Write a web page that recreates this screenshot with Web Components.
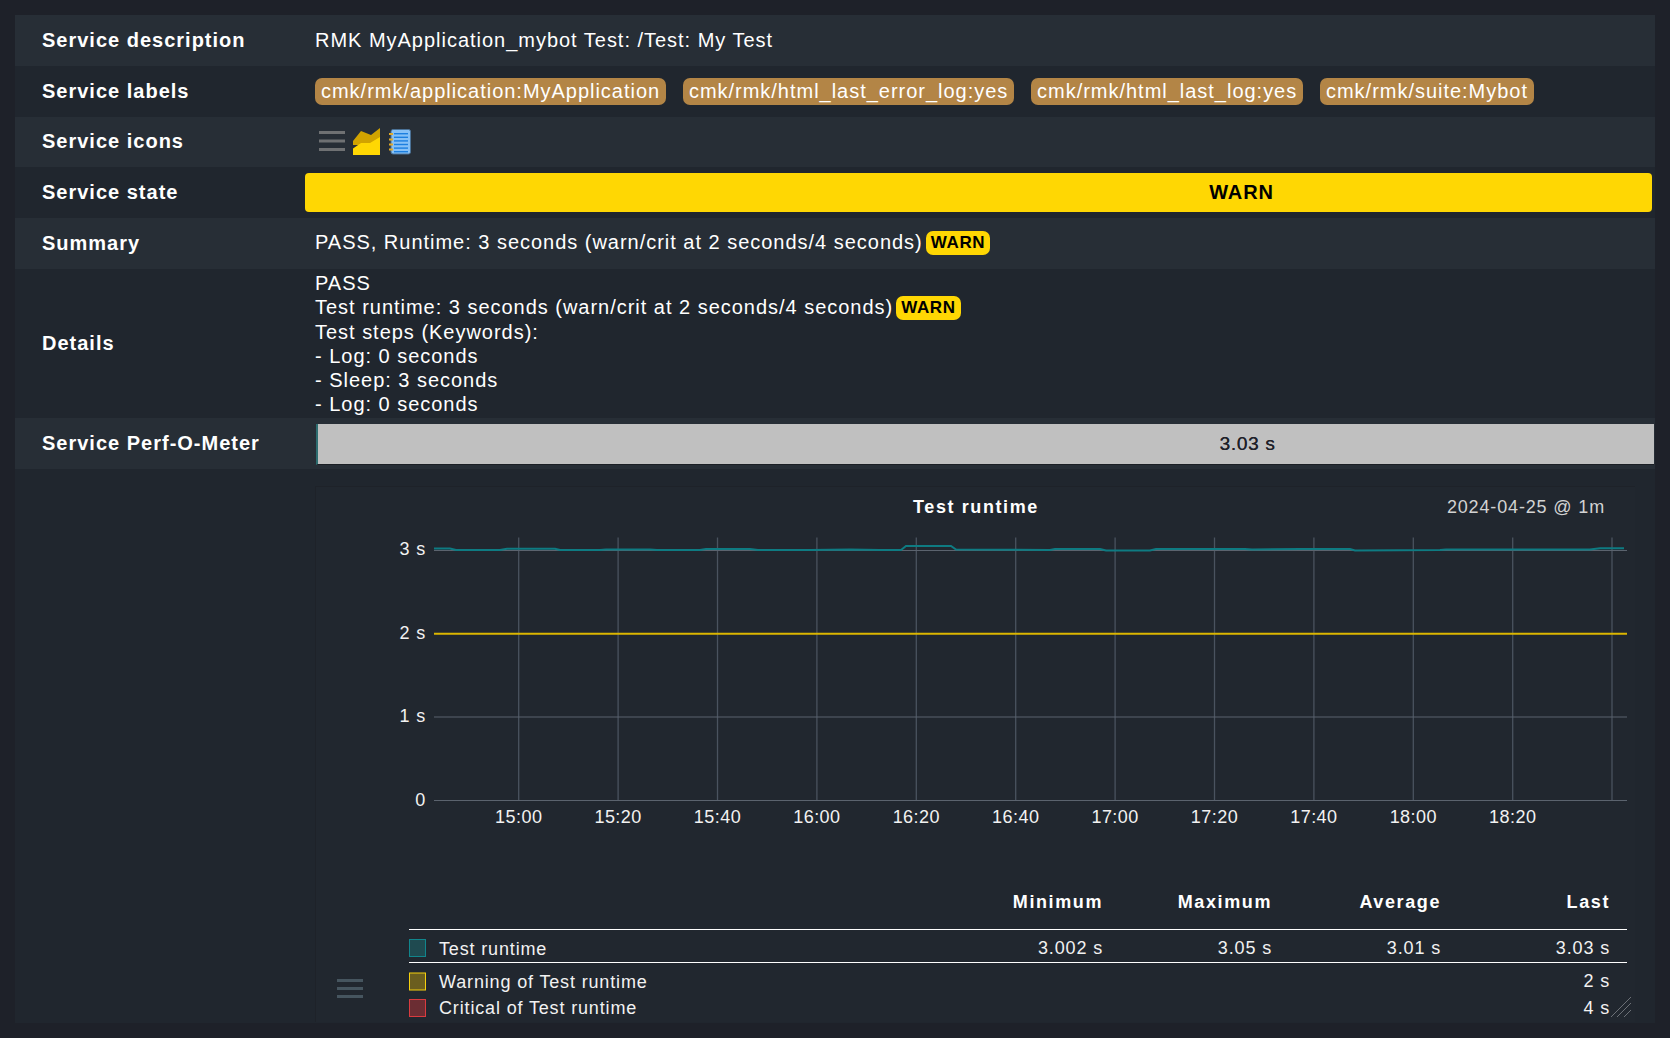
<!DOCTYPE html>
<html><head><meta charset="utf-8"><title>Service</title>
<style>
html,body{margin:0;padding:0;background:#1e2129;}
body{font-family:"Liberation Sans",Arial,sans-serif;color:#fff;font-size:20px;letter-spacing:.98px;height:1038px;overflow:hidden;}
svc-table{margin:15px 15px 0 15px;}
</style></head><body>
<template id="t-row"><style>
:host{display:grid;grid-template-columns:290px 1fr;min-height:var(--h,51px);height:var(--h,51px);background:var(--bg,#272e36);box-sizing:border-box;}
.l{display:flex;align-items:center;padding-left:27px;padding-bottom:var(--lb,0);font-weight:700;letter-spacing:1px;}
.v{display:flex;align-items:center;min-width:0;padding-left:10px;}
</style><div class="l"><slot name="label"></slot></div><div class="v"><slot></slot></div></template>

<template id="t-text"><style>
:host{display:inline-flex;align-items:center;white-space:nowrap;}
:host([lift]){padding-bottom:2px;}
</style><slot></slot></template>

<template id="t-chip"><style>
:host{display:inline-flex;align-items:center;height:27px;padding:0 6px 1px;margin-right:16.8px;background:#b38546;border-radius:7px;color:#fff;white-space:nowrap;box-sizing:border-box;letter-spacing:.98px;}
</style><slot></slot></template>

<template id="t-badge"><style>
:host{display:inline-flex;align-items:center;justify-content:center;height:24px;padding:0 5px;margin-left:3px;background:#ffd703;border-radius:7px;color:#000;font-weight:700;font-size:17px;letter-spacing:.65px;vertical-align:middle;}
</style><slot></slot></template>

<template id="t-state"><style>
:host{display:flex;flex:1;align-items:center;justify-content:center;height:39px;margin:0 3px 0 -10px;padding-left:526px;background:#ffd703;border-radius:4px;color:#000;font-weight:700;font-size:20px;letter-spacing:.9px;}
</style><slot></slot></template>

<template id="t-perf"><style>
:host{display:flex;flex:1;align-items:center;justify-content:center;height:41px;margin:2px 1px 0 1px;padding-left:523px;background:#c0c0c0;border-left:2px solid #2d6d70;border-bottom:1px solid #1b1f25;color:#1e2129;box-sizing:border-box;font-size:19px;letter-spacing:.72px;}
span{text-shadow:.3px 0 0 #1e2129;}
</style><span><slot></slot></span></template>

<template id="t-icons"><style>
:host{display:flex;align-items:center;gap:0;}
svg{display:block}
</style>
<svg width="98" height="28" viewBox="0 0 98 28" aria-hidden="true">
<g transform="translate(-315,-129)">
<g fill="#6f7173"><rect x="319" y="132" width="26" height="3"/><rect x="319" y="140.5" width="26" height="3"/><rect x="319" y="149" width="26" height="3"/></g>
<path d="M353 142 L361 132 L371 136 L380 129 V146 H353Z" fill="#d1a300"/>
<path d="M353 149.5 L361 144 L370 144 L380 138 V156 H353Z" fill="#ffd703"/>
<rect x="391" y="130.5" width="19.5" height="24.5" rx="2" fill="#86c1f7" stroke="#4a7196" stroke-width="1"/>
<g fill="#1c7fe0"><rect x="394" y="134" width="14" height="1.4"/><rect x="394" y="137.6" width="14" height="1.4"/><rect x="394" y="141.2" width="14" height="1.4"/><rect x="394" y="144.8" width="14" height="1.4"/><rect x="394" y="148.4" width="14" height="1.4"/><rect x="394" y="152" width="14" height="1.4"/></g>
<g fill="#e0a92a"><rect x="389" y="134" width="4" height="2"/><rect x="389" y="139.5" width="4" height="2"/><rect x="389" y="144.5" width="4" height="2"/><rect x="389" y="149.5" width="4" height="2"/></g>
</g></svg></template>

<template id="t-chart"><style>
:host{display:block;flex:1;height:536px;margin-top:17px;margin-right:20px;background:#21272f;border-top:1px solid #1e2229;border-left:1px solid #1e2229;box-sizing:border-box;position:relative;align-self:flex-start;}
svg{position:absolute;left:-1px;top:-1px;display:block;}
text{font-family:"Liberation Sans",Arial,sans-serif;font-size:18px;fill:#f2f2f2;letter-spacing:.85px;}
.b{font-weight:700;letter-spacing:1.6px;fill:#fff;}
.r{text-anchor:end}.m{text-anchor:middle}
.t{letter-spacing:.45px}
.d{fill:#d3d3d3;}
</style><div id="s"></div></template>

<svc-table>
<svc-row><span slot="label">Service description</span><svc-text>RMK MyApplication_mybot Test: /Test: My Test</svc-text></svc-row>
<svc-row bg="#20262e"><span slot="label">Service labels</span><svc-chip>cmk/rmk/application:MyApplication</svc-chip><svc-chip>cmk/rmk/html_last_error_log:yes</svc-chip><svc-chip>cmk/rmk/html_last_log:yes</svc-chip><svc-chip>cmk/rmk/suite:Mybot</svc-chip></svc-row>
<svc-row h="50" lb="1"><span slot="label">Service icons</span><svc-icons></svc-icons></svc-row>
<svc-row bg="#20262e"><span slot="label">Service state</span><svc-state>WARN</svc-state></svc-row>
<svc-row><span slot="label">Summary</span><svc-text lift>PASS, Runtime: 3 seconds (warn/crit at 2 seconds/4 seconds)<svc-badge>WARN</svc-badge></svc-text></svc-row>
<svc-row bg="#20262e" h="149"><span slot="label">Details</span><svc-lines>PASS<br>Test runtime: 3 seconds (warn/crit at 2 seconds/4 seconds)<svc-badge>WARN</svc-badge><br>Test steps (Keywords):<br>- Log: 0 seconds<br>- Sleep: 3 seconds<br>- Log: 0 seconds</svc-lines></svc-row>
<svc-row><span slot="label">Service Perf-O-Meter</span><svc-perf>3.03 s</svc-perf></svc-row>
<svc-row bg="#20262e" h="554"><svc-chart></svc-chart></svc-row>
</svc-table>

<script>
function shadow(el,id){const r=el.attachShadow({mode:'open'});r.appendChild(document.getElementById(id).content.cloneNode(true));return r;}
customElements.define('svc-table',class extends HTMLElement{constructor(){super();const r=this.attachShadow({mode:'open'});r.innerHTML='<style>:host{display:block}</style><slot></slot>';}});
customElements.define('svc-row',class extends HTMLElement{constructor(){super();shadow(this,'t-row');}
 connectedCallback(){for(const [a,p,u] of [['bg','--bg',''],['h','--h','px'],['lb','--lb','px']]){const v=this.getAttribute(a);if(v)this.style.setProperty(p,v+u);}}});
customElements.define('svc-text',class extends HTMLElement{constructor(){super();shadow(this,'t-text');}});
customElements.define('svc-chip',class extends HTMLElement{constructor(){super();shadow(this,'t-chip');}});
customElements.define('svc-badge',class extends HTMLElement{constructor(){super();shadow(this,'t-badge');}});
customElements.define('svc-state',class extends HTMLElement{constructor(){super();shadow(this,'t-state');}});
customElements.define('svc-perf',class extends HTMLElement{constructor(){super();shadow(this,'t-perf');}});
customElements.define('svc-icons',class extends HTMLElement{constructor(){super();shadow(this,'t-icons');}});
customElements.define('svc-lines',class extends HTMLElement{constructor(){super();const r=this.attachShadow({mode:'open'});r.innerHTML='<style>:host{display:block;line-height:24px;white-space:nowrap}</style><slot></slot>';}});
customElements.define('svc-chart',class extends HTMLElement{constructor(){super();const r=shadow(this,'t-chart');
 const X0=315,Y0=486;
 const W=1340,H=537;
 const xs=[518.7,618.1,717.5,816.9,916.3,1015.7,1115.1,1214.5,1313.9,1413.3,1512.7,1612];
 const times=['15:00','15:20','15:40','16:00','16:20','16:40','17:00','17:20','17:40','18:00','18:20'];
 let s=`<svg width="${W}" height="${H}" viewBox="${X0} ${Y0} ${W} ${H}">`;
 for(const x of xs)s+=`<line x1="${x}" x2="${x}" y1="537.5" y2="800.5" stroke="#4a535f" stroke-width="1.3"/>`;
 for(const y of [550.5,717,800.5])s+=`<line x1="434" x2="1627" y1="${y}" y2="${y}" stroke="#5b636e" stroke-width="1"/>`;
 s+=`<polyline fill="none" stroke="#0e7b82" stroke-width="2" points="434,548.5 450,548.5 456,550 500,550 507,548.7 555,548.7 560,550 600,550 606,549.5 650,549.5 657,550 700,550 706,549 750,549 758,550 810,550 850,549.5 880,550 901,550 906,546 951,546 956,549.5 1050,550 1055,549 1100,549 1106,550.5 1150,550.5 1156,549 1245,549 1252,549.5 1300,549 1350,549 1355,550.5 1440,550 1446,549.5 1590,549.5 1600,548.2 1624,548.2"/>`;
 s+=`<line x1="434" x2="1627" y1="633.7" y2="633.7" stroke="#dcb600" stroke-width="2"/>`;
 [['3 s',550],['2 s',633.7],['1 s',717],['0',800.5]].forEach(([t,y])=>s+=`<text class="r" x="426" y="${y+5}">${t}</text>`);
 times.forEach((t,i)=>s+=`<text class="m t" x="${xs[i]}" y="823">${t}</text>`);
 s+=`<text class="b m" x="976" y="513">Test runtime</text><text class="r d" x="1605" y="513">2024-04-25 @ 1m</text>`;
 [['Minimum',1103],['Maximum',1272],['Average',1441],['Last',1610]].forEach(([t,x])=>s+=`<text class="b r" x="${x}" y="908">${t}</text>`);
 s+=`<line x1="409" x2="1627" y1="929.5" y2="929.5" stroke="#fff"/><line x1="409" x2="1627" y1="962.5" y2="962.5" stroke="#fff"/>`;
 [[939.5,'#1f4a50','#11858c','Test runtime',955],[973,'#6b5e1f','#f5cf0f','Warning of Test runtime',988],[999.5,'#6b2d33','#d93b3f','Critical of Test runtime',1014]].forEach(([y,f,b,t,ty])=>{
  s+=`<rect x="409.5" y="${y}" width="16" height="17" fill="${f}" stroke="${b}"/><text x="439" y="${ty}">${t}</text>`;});
 [['3.002 s',1103,954],['3.05 s',1272,954],['3.01 s',1441,954],['3.03 s',1610,954],['2 s',1610,987],['4 s',1610,1014]].forEach(([t,x,y])=>s+=`<text class="r" x="${x}" y="${y}">${t}</text>`);
 s+=`<g fill="#46555f"><rect x="337" y="979" width="26" height="3"/><rect x="337" y="987" width="26" height="3"/><rect x="337" y="995" width="26" height="3"/></g>`;
 s+=`<g stroke="#6c7076" stroke-width="1"><line x1="1611" y1="1017" x2="1631" y2="997"/><line x1="1617" y1="1017" x2="1631" y2="1003"/><line x1="1624" y1="1017" x2="1631" y2="1010"/></g>`;
 s+='</svg>';
 r.getElementById('s').innerHTML=s;
}});
</script>
</body></html>
